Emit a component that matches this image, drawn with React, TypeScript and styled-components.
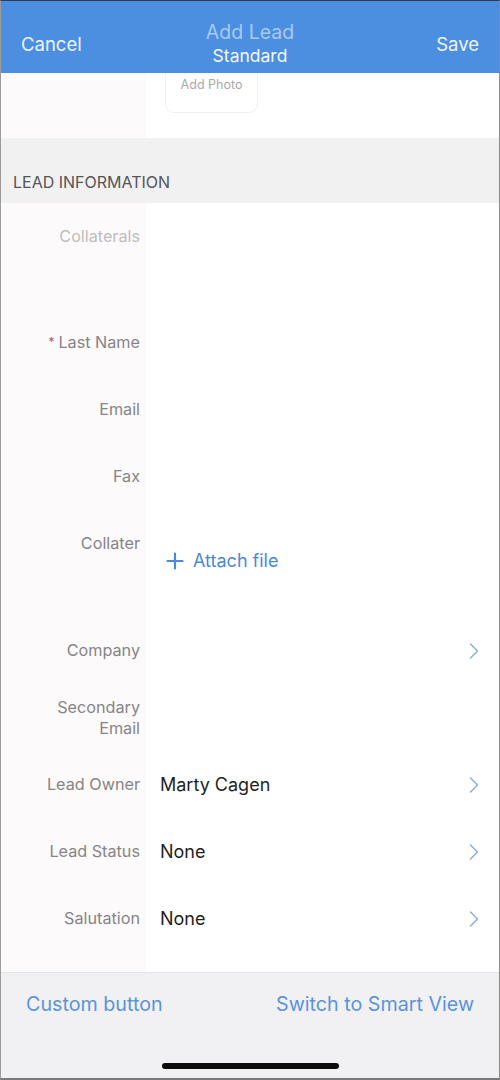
import React from "react";
import styled, { createGlobalStyle } from "styled-components";

const Global = createGlobalStyle`
  html, body { margin: 0; padding: 0; background: #fff; }
  body { font-family: Inter, "Noto Sans", "Liberation Sans", sans-serif; -webkit-font-smoothing: antialiased; }
  * { box-sizing: border-box; }
`;

const Screen = styled.div`
  width: 500px;
  height: 1080px;
  display: flex;
  flex-direction: column;
  border-top: 1px solid #2e3c4f;
  border-left: 1px solid #9c9c9c;
  border-right: 1px solid #8c8c8c;
  border-bottom: 2px solid #7a7a7a;
  overflow: hidden;
  background: #fff;
`;

const NavBar = styled.header`
  height: 72px;
  flex: none;
  background: #4c8fe1;
  display: grid;
  grid-template-columns: 1fr auto 1fr;
  align-items: center;
  padding: 0 20px 0 20px;
`;

const NavButton = styled.span<{ $align: "left" | "right" }>`
  font-size: 18.5px;
  color: #eef4fc;
  justify-self: ${(p) => (p.$align === "left" ? "start" : "end")};
  padding-top: 14px;
`;

const TitleBlock = styled.div`
  display: flex;
  flex-direction: column;
  align-items: center;
  padding-top: 14px;
`;

const TitleFaded = styled.span`
  font-size: 19.5px;
  color: #a9c9f1;
  line-height: 22px;
`;

const TitleMain = styled.span`
  font-size: 17.5px;
  color: #f4f8fd;
  line-height: 22px;
  margin-top: 2px;
`;

const TwoCol = styled.div<{ $h?: number }>`
  display: grid;
  grid-template-columns: 145px 1fr;
  ${(p) => (p.$h ? `height: ${p.$h}px;` : "")}
  flex: none;
`;

const LabelCell = styled.div`
  background: #fdfafb;
  display: flex;
  flex-direction: column;
  align-items: stretch;
`;

const ValueCell = styled.div`
  background: #ffffff;
  display: flex;
  flex-direction: column;
  padding-left: 14px;
  padding-right: 19px;
`;

const PhotoCell = styled.div`
  background: #ffffff;
  border-bottom-left-radius: 10px;
  padding-left: 19px;
`;

const PhotoBox = styled.div`
  width: 93px;
  height: 40px;
  border: 1px solid #f3eff0;
  border-top: none;
  border-radius: 0 0 9px 9px;
  display: flex;
  justify-content: center;
  padding-top: 4px;
  font-size: 12.5px;
  color: #a9a9a9;
`;

const SectionHeader = styled.div`
  height: 65px;
  flex: none;
  background: #f2f1f2;
  display: flex;
  align-items: center;
  padding-left: 12px;
  padding-top: 22px;
  font-size: 16px;
  color: #555558;
`;

const LabelText = styled.div<{ $muted?: boolean }>`
  height: 67px;
  display: flex;
  align-items: center;
  justify-content: flex-end;
  text-align: right;
  padding-right: 6px;
  font-size: 16.2px;
  line-height: 21px;
  color: ${(p) => (p.$muted ? "#bdbdbf" : "#858587")};
`;

const Required = styled.span`
  color: #d3475d;
  font-size: 12px;
  margin-right: 4px;
  position: relative;
  top: -2px;
`;

const ValueLine = styled.div`
  height: 67px;
  display: flex;
  align-items: center;
  justify-content: space-between;
  font-size: 18px;
  color: #1f1f22;
`;

const AttachLine = styled.div`
  margin-top: 40px;
  display: flex;
  align-items: center;
  gap: 9px;
  padding-left: 6px;
  font-size: 18px;
  color: #4b89d7;
`;

const Filler = styled.div`
  flex: 1;
  display: grid;
  grid-template-columns: 145px 1fr;
`;

const Footer = styled.footer`
  height: 106px;
  flex: none;
  background: #f1f1f4;
  border-top: 1px solid #e4e4e8;
  display: flex;
  flex-direction: column;
  align-items: stretch;
`;

const FooterButtons = styled.div`
  display: flex;
  justify-content: space-between;
  padding: 19px 25px 0 25px;
  font-size: 19.7px;
  color: #5a94d8;
`;

const HomeBar = styled.div`
  width: 177px;
  height: 6px;
  border-radius: 3px;
  background: #0a0a0a;
  align-self: center;
  margin-top: auto;
  margin-bottom: 9px;
`;

const Chevron = () => (
  <svg width="12" height="18" viewBox="0 0 12 18" fill="none">
    <path d="M2.5 2 L9.5 9 L2.5 16" stroke="#8fb1de" strokeWidth="1.6" strokeLinecap="round" strokeLinejoin="round" />
  </svg>
);

const Plus = () => (
  <svg width="18" height="18" viewBox="0 0 18 18" fill="none">
    <path d="M9 1.5 V16.5 M1.5 9 H16.5" stroke="#4b89d7" strokeWidth="2.2" strokeLinecap="round" />
  </svg>
);

type Field = {
  label: React.ReactNode;
  value?: string;
  chevron?: boolean;
  muted?: boolean;
  height?: number;
  attach?: boolean;
};

const fields: Field[] = [
  { label: "Collaterals", muted: true, height: 106 },
  { label: <><Required>*</Required>Last Name</>, height: 67 },
  { label: "Email", height: 67 },
  { label: "Fax", height: 67 },
  { label: "Collater", height: 107, attach: true },
  { label: "Company", chevron: true, height: 67 },
  { label: <>Secondary<br />Email</>, height: 67 },
  { label: "Lead Owner", value: "Marty Cagen", chevron: true, height: 67 },
  { label: "Lead Status", value: "None", chevron: true, height: 67 },
  { label: "Salutation", value: "None", chevron: true, height: 67 },
];

export default function App() {
  return (
    <>
      <Global />
      <Screen>
        <NavBar>
          <NavButton $align="left">Cancel</NavButton>
          <TitleBlock>
            <TitleFaded>Add Lead</TitleFaded>
            <TitleMain>Standard</TitleMain>
          </TitleBlock>
          <NavButton $align="right">Save</NavButton>
        </NavBar>
        <TwoCol $h={65}>
          <LabelCell />
          <PhotoCell>
            <PhotoBox>Add Photo</PhotoBox>
          </PhotoCell>
        </TwoCol>
        <SectionHeader>LEAD INFORMATION</SectionHeader>
        {fields.map((f, i) => (
          <TwoCol key={i} $h={f.height}>
            <LabelCell>
              <LabelText $muted={f.muted}>
                <span>{f.label}</span>
              </LabelText>
            </LabelCell>
            <ValueCell>
              {f.attach ? (
                <AttachLine>
                  <Plus />
                  <span>Attach file</span>
                </AttachLine>
              ) : (
                <ValueLine>
                  <span>{f.value ?? ""}</span>
                  {f.chevron ? <Chevron /> : null}
                </ValueLine>
              )}
            </ValueCell>
          </TwoCol>
        ))}
        <Filler>
          <LabelCell />
          <ValueCell />
        </Filler>
        <Footer>
          <FooterButtons>
            <span>Custom button</span>
            <span>Switch to Smart View</span>
          </FooterButtons>
          <HomeBar />
        </Footer>
      </Screen>
    </>
  );
}
